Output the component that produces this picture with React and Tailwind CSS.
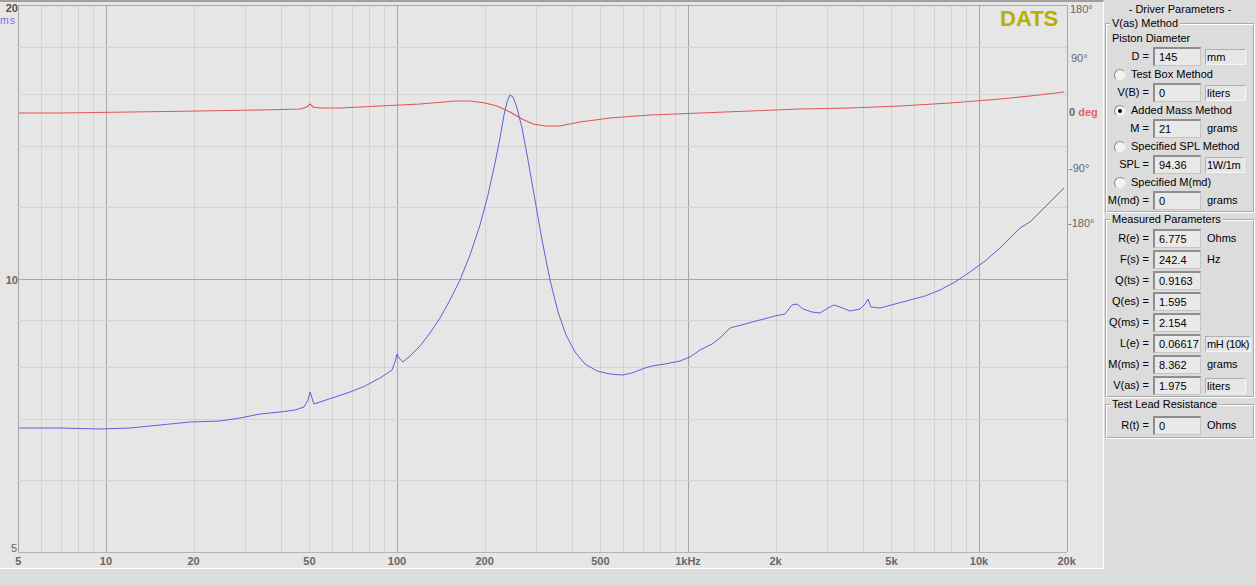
import React from 'react';

// frequency / magnitude mapping in page pixels
const fx = (f) => 18.4 + 291 * Math.log10(f / 5);
const vy = (v) => 552 - 273 * Math.log2(v / 5);

const VLINES = [
  5, 6, 7, 8, 9, 10, 20, 30, 40, 50, 60, 70, 80, 90, 100, 200, 300, 400, 500, 600, 700, 800, 900,
  1000, 2000, 3000, 4000, 5000, 6000, 7000, 8000, 9000, 10000, 20000,
];
const MAJOR = [5, 10, 100, 1000, 10000, 20000];
const HLINES = [6, 7, 8, 9, 12, 14, 16, 18];

const XLABELS = [
  ['5', 5], ['10', 10], ['20', 20], ['50', 50], ['100', 100], ['200', 200], ['500', 500],
  ['1kHz', 1000], ['2k', 2000], ['5k', 5000], ['10k', 10000], ['20k', 20000],
];

const BLUE = [
  [19, 428], [60, 428], [100, 429], [130, 428], [160, 425], [190, 422], [220, 421], [240, 418],
  [260, 414], [280, 412], [295, 410], [304, 407], [308, 400], [310, 392], [312, 398], [314, 404],
  [320, 402], [335, 397], [350, 392], [365, 386], [380, 378], [392, 370], [395, 362], [397, 354],
  [399, 358], [403, 362], [410, 356], [420, 346], [430, 333], [440, 318], [450, 300], [460, 280],
  [470, 255], [480, 225], [488, 195], [495, 163], [500, 138], [504, 115], [507, 102], [510, 95],
  [513, 97], [517, 108], [522, 128], [528, 160], [535, 200], [542, 240], [550, 280], [558, 312],
  [566, 335], [575, 352], [585, 364], [597, 371], [610, 374], [622, 375], [632, 373], [645, 368],
  [652, 366], [665, 364], [680, 361], [690, 357], [700, 350], [712, 344], [720, 338], [730, 328],
  [745, 324], [760, 320], [775, 316], [785, 314], [792, 305], [797, 304], [803, 309], [812, 312],
  [820, 313], [828, 308], [834, 305], [840, 307], [850, 311], [860, 309], [866, 303], [868, 299],
  [871, 307], [880, 308], [895, 304], [910, 300], [925, 296], [940, 290], [955, 282], [970, 272],
  [985, 261], [1000, 248], [1012, 236], [1020, 228], [1030, 222], [1040, 212], [1050, 202],
  [1058, 194], [1064, 188],
];

const RED = [
  [19, 113], [60, 113], [130, 112], [200, 111], [260, 110], [300, 109], [307, 107], [310, 104],
  [313, 107], [320, 108], [340, 108], [380, 106], [420, 104], [455, 101], [470, 101], [485, 103],
  [497, 106], [510, 112], [522, 119], [533, 124], [545, 126], [560, 126], [580, 122], [610, 118],
  [650, 115], [700, 113], [750, 111], [800, 109], [850, 108], [900, 106], [950, 103], [1000, 99],
  [1030, 96], [1064, 92],
];

const pts = (arr) => arr.map(([x, y]) => `${x},${y}`).join(' ');

function Chart() {
  const left = fx(5);
  const right = fx(20000);
  return (
    <svg width="1103" height="566" viewBox="0 2 1103 566" className="block" style={{ fontFamily: '"Liberation Sans", Arial, sans-serif' }}>
      <g shapeRendering="crispEdges">
        {VLINES.map((f) => (
          <line
            key={f}
            x1={Math.round(fx(f)) + 0.5}
            x2={Math.round(fx(f)) + 0.5}
            y1={5}
            y2={552}
            stroke={MAJOR.includes(f) ? '#a6a6a6' : '#d3d3d3'}
          />
        ))}
        {HLINES.map((v) => (
          <line key={v} x1={left} x2={right} y1={Math.round(vy(v)) + 0.5} y2={Math.round(vy(v)) + 0.5} stroke="#d3d3d3" />
        ))}
        <line x1={left} x2={right} y1={279.5} y2={279.5} stroke="#a6a6a6" />
        <line x1={left} x2={right} y1={5.5} y2={5.5} stroke="#a6a6a6" />
        <line x1={left} x2={right} y1={552.5} y2={552.5} stroke="#b4b4b4" />
      </g>

      <polyline points={pts(RED)} fill="none" stroke="#e05555" strokeWidth="1.1" />
      <polyline points={pts(BLUE)} fill="none" stroke="#6060dc" strokeWidth="1" />

      <g fontSize="11" fontWeight="bold" fill="#666666">
        {XLABELS.map(([t, f]) => (
          <text key={t} x={fx(f)} y={565} textAnchor="middle">{t}</text>
        ))}
        <text x={18} y={284} textAnchor="end">10</text>
        <text x={17} y={552} textAnchor="end" fontWeight="normal">5</text>
        <text x={18} y={12} textAnchor="end" fill="#55504a">20</text>
      </g>
      <text x={0} y={24} fontSize="10.5" fill="#7070e6" letterSpacing="1">ms</text>

      <g fontSize="11" fill="#666666">
        <text x={1070} y={13}>180°</text>
        <text x={1071} y={62}>90°</text>
        <text x={1069} y={116} fontWeight="bold">
          0 <tspan fill="#e06666">deg</tspan>
        </text>
        <text x={1069} y={172}>-90°</text>
        <text x={1068} y={227}>-180°</text>
      </g>

      <text x={1000} y={26} fontSize="22" fontWeight="bold" fill="#b7b000">DATS</text>
    </svg>
  );
}

const inputCls =
  'w-[48px] h-[19px] bg-[#e9e9e9] border-t-2 border-l-2 border-r border-b border-t-[#8e8e8e] border-l-[#8e8e8e] border-r-[#c4c4c4] border-b-[#c4c4c4] pl-[4px] leading-[16px]';
const unitBoxCls =
  'ml-[4px] h-[16px] pl-[1px] bg-[#e6e6e6] border border-t-[#b0b0b0] border-l-[#b0b0b0] border-r-[#f6f6f6] border-b-[#f6f6f6] leading-[14px] whitespace-nowrap';

function Field({ label, value, unit, boxed, unitWidth }) {
  return (
    <div className="flex items-center h-[19px]">
      <span className="w-[42px] text-right mr-[4px] whitespace-nowrap">{label}</span>
      <div className={inputCls}>{value}</div>
      {unit &&
        (boxed ? (
          <span className={`${unitBoxCls} ${unitWidth}`}>{unit}</span>
        ) : (
          <span className="ml-[6px] whitespace-nowrap">{unit}</span>
        ))}
    </div>
  );
}

function Radio({ label, checked }) {
  return (
    <div className="flex items-center h-[17px] pl-[7px]">
      <span className="w-[12px] h-[12px] rounded-full bg-[#f4f4f4] border border-t-[#8a8a8a] border-l-[#8a8a8a] border-r-[#e4e4e4] border-b-[#e4e4e4] flex items-center justify-center">
        {checked && <span className="w-[4px] h-[4px] rounded-full bg-black" />}
      </span>
      <span className="ml-[5px]">{label}</span>
    </div>
  );
}

function Group({ title, children, className = '' }) {
  return (
    <fieldset className={`mx-[1px] border-2 border-white [border-style:groove] px-0 ${className}`}>
      <legend className="ml-[3px] px-[2px] leading-[13px]">{title}</legend>
      {children}
    </fieldset>
  );
}

function Panel() {
  return (
    <div className="w-[152px] flex flex-col text-[11px] text-black leading-[13px]" style={{ fontFamily: '"Liberation Sans", Arial, sans-serif' }}>
      <div className="h-[17px] flex items-center justify-center pt-[2px]">- Driver Parameters -</div>
      <Group title="V(as) Method" className="pb-[1px]">
        <div className="h-[17px] flex items-center pl-[5px]">Piston Diameter</div>
        <Field label="D =" value="145" unit="mm" boxed unitWidth="w-[41px]" />
        <Radio label="Test Box Method" />
        <Field label="V(B) =" value="0" unit="liters" boxed unitWidth="w-[41px]" />
        <Radio label="Added Mass Method" checked />
        <Field label="M =" value="21" unit="grams" />
        <Radio label="Specified SPL Method" />
        <Field label="SPL =" value="94.36" unit="1W/1m" boxed unitWidth="w-[40px] tracking-[-0.3px]" />
        <Radio label="Specified M(md)" />
        <Field label="M(md) =" value="0" unit="grams" />
      </Group>
      <Group title="Measured Parameters" className="pt-[3px] pb-[1px]">
        <div className="flex flex-col gap-[2px]">
          <Field label="R(e) =" value="6.775" unit="Ohms" />
          <Field label="F(s) =" value="242.4" unit="Hz" />
          <Field label="Q(ts) =" value="0.9163" />
          <Field label="Q(es) =" value="1.595" />
          <Field label="Q(ms) =" value="2.154" />
          <Field label="L(e) =" value="0.06617" unit="mH (10k)" boxed unitWidth="w-[46px] tracking-[-0.4px]" />
          <Field label="M(ms) =" value="8.362" unit="grams" />
          <Field label="V(as) =" value="1.975" unit="liters" boxed unitWidth="w-[41px]" />
        </div>
      </Group>
      <Group title="Test Lead Resistance" className="pt-[5px] pb-[2px]">
        <Field label="R(t) =" value="0" unit="Ohms" />
      </Group>
    </div>
  );
}

export default function App() {
  return (
    <div className="w-[1256px] h-[586px] bg-[#dcdcdc] overflow-hidden flex flex-col">
      <div className="flex">
        <div className="w-[1104px] h-[569px] bg-[#e6e6e6] border-t-2 border-t-[#a0a0a0] border-r border-r-white border-b border-b-white">
          <Chart />
        </div>
        <Panel />
      </div>
    </div>
  );
}
